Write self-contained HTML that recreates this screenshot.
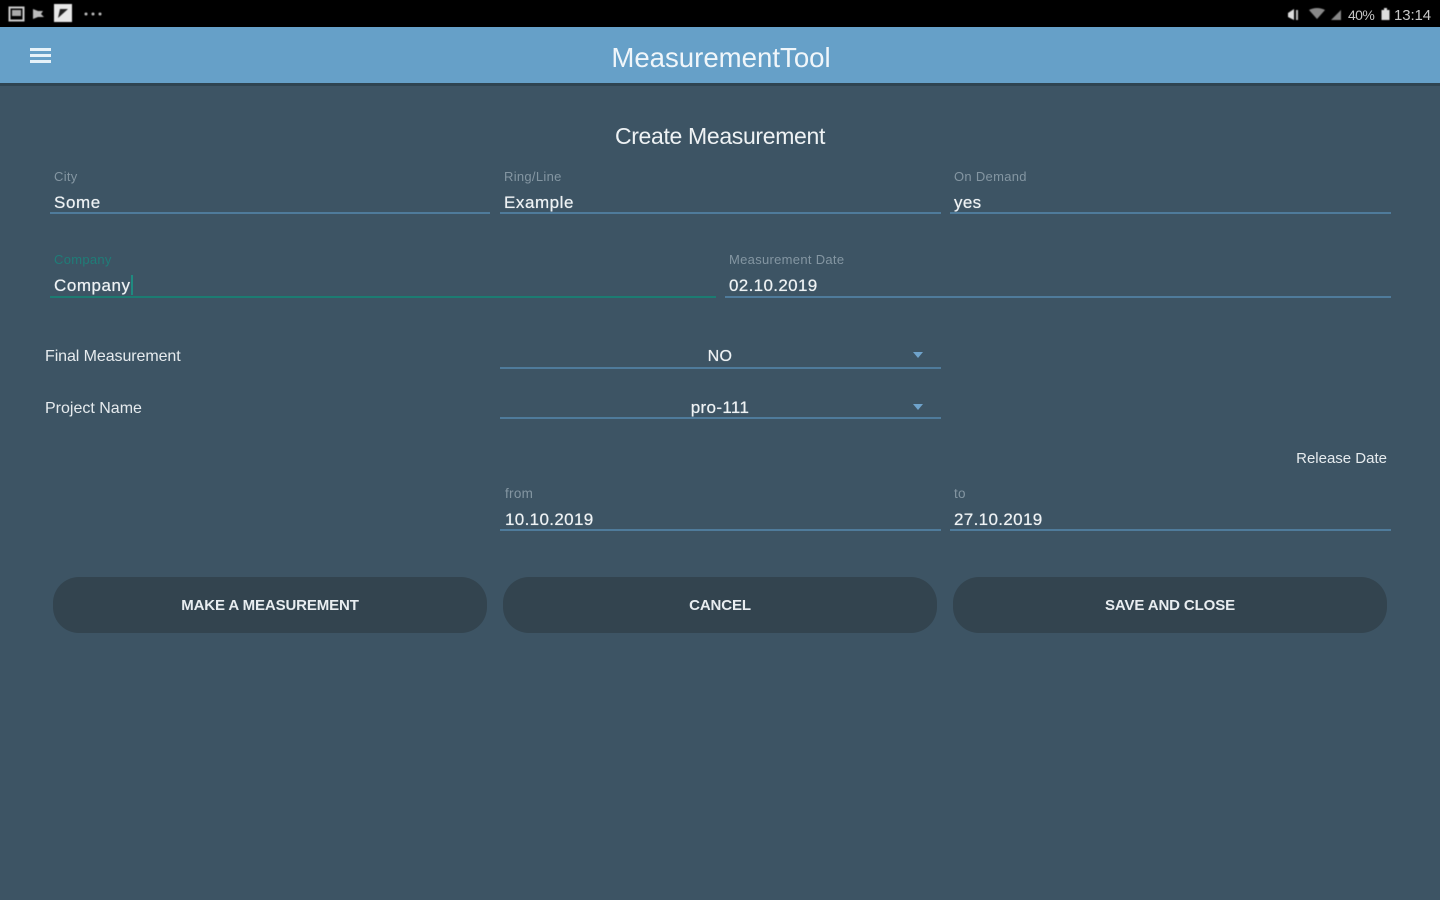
<!DOCTYPE html>
<html><head><meta charset="utf-8"><style>
html,body{margin:0;padding:0;width:1440px;height:900px;overflow:hidden;background:#3d5464;font-family:"Liberation Sans",sans-serif}
.a{position:absolute;white-space:nowrap;line-height:1;filter:blur(.35px)}
.l{font-size:13px;color:#8496a2;letter-spacing:.3px}
.v{font-size:17px;color:#eef2f4;letter-spacing:.35px;text-shadow:0 0 .6px #eef2f4}
.u{position:absolute;height:2px;background:#4f7b9b}
.b{position:absolute;top:577px;height:56px;border-radius:26px;background:#33444f;color:#e8edf0;font-size:15px;font-weight:bold;text-align:center;line-height:57px;letter-spacing:-.12px}
.b span{filter:blur(.35px);display:inline-block}
.t{position:absolute;width:0;height:0;border-left:5px solid transparent;border-right:5px solid transparent;border-top:6px solid #6fa3cb}
</style></head><body>
<div style="position:absolute;left:0;top:0;width:1440px;height:27px;background:#000"></div>
<svg style="position:absolute;left:0;top:0;filter:blur(.6px)" width="110" height="27">
<rect x="9.500" y="7.500" width="14" height="13" fill="none" stroke="#ccc" stroke-width="2"/><rect x="12" y="10" width="9" height="6" fill="#aaa"/>
<path d="M33 9v10l5-2h6l-3-3 2-3h-5z" fill="#bbb"/>
<rect x="54" y="4" width="18" height="18" fill="#e8e8e8"/><path d="M58 18l2-9h8z" fill="#222"/>
<circle cx="86" cy="14" r="1.500" fill="#bbb"/><circle cx="93" cy="14" r="1.500" fill="#bbb"/><circle cx="100" cy="14" r="1.500" fill="#bbb"/>
</svg>
<svg style="position:absolute;left:1285px;top:4px;filter:blur(.6px)" width="64" height="20">
<path d="M3 9l6-4v11l-6-3z" fill="#ddd"/><rect x="11" y="6" width="2" height="10" fill="#bbb"/>
<path d="M24 6q8-4 16 0l-8 9z" fill="#888"/><path d="M46 16l10-10v10z" fill="#888"/>
</svg>
<div class="a" style="left:1348px;top:8px;font-size:14px;color:#c4c4c4;letter-spacing:-.6px">40%</div>
<svg style="position:absolute;left:1380px;top:7px;filter:blur(.5px)" width="12" height="15"><rect x="1.500" y="3" width="8" height="10" fill="#ddd"/><rect x="4" y="1" width="3" height="2" fill="#ddd"/></svg>
<div class="a" style="left:1394px;top:8px;font-size:15px;color:#c8c8c8;letter-spacing:-.1px">13:14</div>

<div style="position:absolute;left:0;top:27px;width:1440px;height:56px;background:#66a0c8"></div>
<div style="position:absolute;left:0;top:83px;width:1440px;height:3px;background:#2f4451"></div>
<div style="position:absolute;left:30px;top:48px;width:21px;height:3px;background:#e6f2f9"></div>
<div style="position:absolute;left:30px;top:54px;width:21px;height:3px;background:#e6f2f9"></div>
<div style="position:absolute;left:30px;top:60px;width:21px;height:3px;background:#e6f2f9"></div>
<div class="a" style="left:0;width:1442px;text-align:center;top:44px;font-size:27.600px;color:#f0f6fa">MeasurementTool</div>
<div class="a" style="left:0;width:1440px;text-align:center;top:125px;font-size:23px;color:#eef2f4;letter-spacing:-.33px">Create Measurement</div>

<div class="a l" style="left:54px;top:170px">City</div>
<div class="a v" style="left:54px;top:194px;letter-spacing:.6px">Some</div>
<div class="u" style="left:50px;top:212px;width:440px"></div>
<div class="a l" style="left:504px;top:170px">Ring/Line</div>
<div class="a v" style="left:504px;top:194px;letter-spacing:.55px">Example</div>
<div class="u" style="left:500px;top:212px;width:441px"></div>
<div class="a l" style="left:954px;top:170px">On Demand</div>
<div class="a v" style="left:954px;top:194px">yes</div>
<div class="u" style="left:950px;top:212px;width:441px"></div>

<div class="a l" style="left:54px;top:253px;color:#1f7d78">Company</div>
<div class="a v" style="left:54px;top:277px;letter-spacing:.55px">Company</div>
<div style="position:absolute;left:131px;top:275px;width:2px;height:20px;background:#1f8a80"></div>
<div class="u" style="left:50px;top:296px;width:666px;background:#1c7c72"></div>
<div class="a l" style="left:729px;top:253px">Measurement Date</div>
<div class="a v" style="left:729px;top:277px">02.10.2019</div>
<div class="u" style="left:725px;top:296px;width:666px"></div>

<div class="a" style="left:45px;top:349px;font-size:16px;color:#e6ebee;letter-spacing:-.08px">Final Measurement</div>
<div class="a v" style="left:500px;width:440px;text-align:center;top:349px;font-size:16px">NO</div>
<div class="t" style="left:913px;top:352px"></div>
<div class="u" style="left:500px;top:367px;width:441px"></div>
<div class="a" style="left:45px;top:401px;font-size:16px;color:#e6ebee">Project Name</div>
<div class="a v" style="left:500px;width:440px;text-align:center;top:399px">pro-111</div>
<div class="t" style="left:913px;top:404px"></div>
<div class="u" style="left:500px;top:417px;width:441px"></div>

<div class="a" style="right:53px;top:451px;font-size:15px;color:#e6ebee">Release Date</div>
<div class="a l" style="left:505px;top:487px;font-size:13.500px">from</div>
<div class="a v" style="left:505px;top:511px">10.10.2019</div>
<div class="u" style="left:500px;top:529px;width:441px"></div>
<div class="a l" style="left:954px;top:487px;font-size:13.500px">to</div>
<div class="a v" style="left:954px;top:511px">27.10.2019</div>
<div class="u" style="left:950px;top:529px;width:441px"></div>

<div class="b" style="left:53px;width:434px"><span>MAKE A MEASUREMENT</span></div>
<div class="b" style="left:503px;width:434px"><span>CANCEL</span></div>
<div class="b" style="left:953px;width:434px"><span>SAVE AND CLOSE</span></div>
</body></html>
